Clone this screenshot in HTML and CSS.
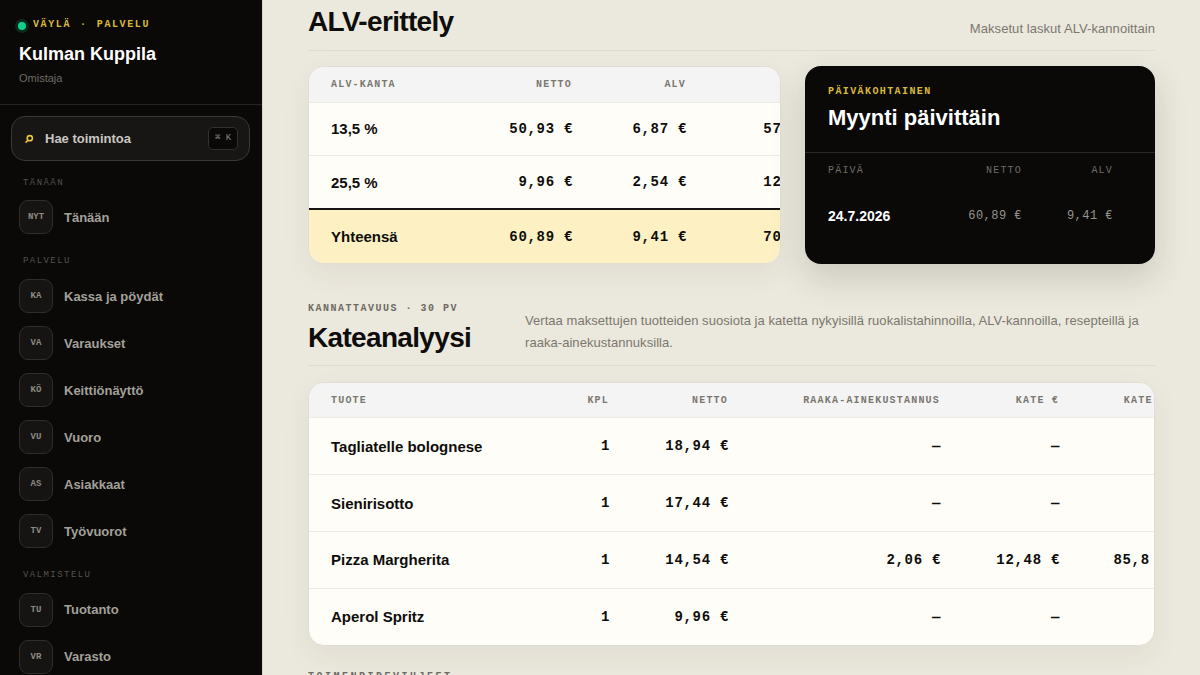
FILE: index.html
```html
<!DOCTYPE html>
<html lang="fi">
<head>
    <meta charset="UTF-8">
    <title>Kulman Kuppila</title>
    <link rel="stylesheet" href="styles.css">
</head>
<body>
    <aside class="sidebar">
        <div class="brand">
            <div class="brand-tag"><span class="dot"></span>VÄYLÄ · PALVELU</div>
            <div class="brand-name">Kulman Kuppila</div>
            <div class="brand-role">Omistaja</div>
        </div>
        <div class="search">
            <svg class="search-icon" width="10" height="10" viewBox="0 0 10 10"><circle cx="5.8" cy="4.2" r="2.6" fill="none" stroke="#e8c33f" stroke-width="1.6"/><path d="M3.9 6.2 1.6 8.6" stroke="#e8c33f" stroke-width="1.6" fill="none"/></svg>
            <span class="search-text">Hae toimintoa</span>
            <span class="kbd">⌘ K</span>
        </div>
        <nav class="nav">
            <div class="nav-label">TÄNÄÄN</div>
            <div class="nav-item"><span class="nav-box">NYT</span>Tänään</div>
            <div class="nav-label">PALVELU</div>
            <div class="nav-item"><span class="nav-box">KA</span>Kassa ja pöydät</div>
            <div class="nav-item"><span class="nav-box">VA</span>Varaukset</div>
            <div class="nav-item"><span class="nav-box">KÖ</span>Keittiönäyttö</div>
            <div class="nav-item"><span class="nav-box">VU</span>Vuoro</div>
            <div class="nav-item"><span class="nav-box">AS</span>Asiakkaat</div>
            <div class="nav-item"><span class="nav-box">TV</span>Työvuorot</div>
            <div class="nav-label">VALMISTELU</div>
            <div class="nav-item"><span class="nav-box">TU</span>Tuotanto</div>
            <div class="nav-item"><span class="nav-box">VR</span>Varasto</div>
        </nav>
    </aside>

    <main class="main">
        <div class="section-head first">
            <h2 class="title">ALV-erittely</h2>
            <p class="head-note">Maksetut laskut ALV-kannoittain</p>
        </div>

        <div class="vat-row">
            <div class="card">
                <table class="table vat-table">
                    <colgroup><col class="v1"><col class="v2"><col class="v3"><col class="v4"></colgroup>
                    <tr><th>ALV-KANTA</th><th class="num">NETTO</th><th class="num">ALV</th><th class="num">BRUTTO</th></tr>
                    <tr><td class="name">13,5 %</td><td class="num">50,93 €</td><td class="num">6,87 €</td><td class="num">57,80 €</td></tr>
                    <tr><td class="name">25,5 %</td><td class="num">9,96 €</td><td class="num">2,54 €</td><td class="num">12,50 €</td></tr>
                    <tr class="total"><td class="name">Yhteensä</td><td class="num">60,89 €</td><td class="num">9,41 €</td><td class="num">70,30 €</td></tr>
                </table>
            </div>

            <div class="dark-card">
                <div class="dark-head">
                    <div class="dark-tag">PÄIVÄKOHTAINEN</div>
                    <div class="dark-title">Myynti päivittäin</div>
                </div>
                <table class="dark-table">
                    <colgroup><col class="d1"><col class="d2"><col class="d3"></colgroup>
                    <tr><th>PÄIVÄ</th><th class="num">NETTO</th><th class="num">ALV</th></tr>
                    <tr><td class="date">24.7.2026</td><td class="num">60,89 €</td><td class="num">9,41 €</td></tr>
                </table>
            </div>
        </div>

        <div class="section-head second">
            <div class="head-left">
                <div class="eyebrow">KANNATTAVUUS · 30 PV</div>
                <h2 class="title">Kateanalyysi</h2>
            </div>
            <p class="head-text">Vertaa maksettujen tuotteiden suosiota ja katetta nykyisillä ruokalistahinnoilla, ALV-kannoilla, resepteillä ja raaka-ainekustannuksilla.</p>
        </div>

        <div class="card">
            <table class="table margin-table">
                <colgroup><col class="m1"><col class="m2"><col class="m3"><col class="m4"><col class="m5"><col class="m6"></colgroup>
                <tr><th>TUOTE</th><th class="num">KPL</th><th class="num">NETTO</th><th class="num">RAAKA-AINEKUSTANNUS</th><th class="num">KATE €</th><th class="num">KATE-%</th></tr>
                <tr><td class="name">Tagliatelle bolognese</td><td class="num">1</td><td class="num">18,94 €</td><td class="num">—</td><td class="num">—</td><td class="num"></td></tr>
                <tr><td class="name">Sienirisotto</td><td class="num">1</td><td class="num">17,44 €</td><td class="num">—</td><td class="num">—</td><td class="num"></td></tr>
                <tr><td class="name">Pizza Margherita</td><td class="num">1</td><td class="num">14,54 €</td><td class="num">2,06 €</td><td class="num">12,48 €</td><td class="num">85,8 %</td></tr>
                <tr><td class="name">Aperol Spritz</td><td class="num">1</td><td class="num">9,96 €</td><td class="num">—</td><td class="num">—</td><td class="num"></td></tr>
            </table>
        </div>

        <div class="eyebrow next">TOIMENPIDEVIHJEET</div>
    </main>
</body>
</html>
```

FILE: styles.css
```css
* {
    box-sizing: border-box;
}
html, body {
    margin: 0;
    height: 100%;
    overflow: hidden;
}
body {
    display: flex;
    font-family: "Liberation Sans", Arial, sans-serif;
    background: #ebe8dd;
    color: #0e0d0b;
}
p, h2 {
    margin: 0;
}

/* sidebar */
.sidebar {
    width: 263px;
    flex: none;
    height: 675px;
    overflow: hidden;
    background: #0a0908;
    border-right: 1px solid #d9d6cc;
}
.brand {
    padding: 19px 19px 19px;
    border-bottom: 1px solid #262422;
}
.brand-tag {
    display: flex;
    align-items: center;
    font-family: "Liberation Mono", monospace;
    font-size: 10px;
    font-weight: 700;
    line-height: 12px;
    letter-spacing: .16em;
    word-spacing: 1.5px;
    white-space: pre;
    color: #d9b93c;
}
.dot {
    width: 8px;
    height: 8px;
    margin: 1px 7px 0 -1px;
    border-radius: 50%;
    background: #10d08a;
    box-shadow: 0 0 0 3px rgba(16, 208, 138, .16);
}
.brand-name {
    margin-top: 12px;
    font-size: 18px;
    font-weight: 700;
    line-height: 22px;
    color: #fff;
}
.brand-role {
    margin-top: 6px;
    font-size: 11px;
    line-height: 14px;
    color: #6e6b66;
}
.search {
    display: flex;
    align-items: center;
    height: 45px;
    margin: 11px 12px 0 11px;
    padding: 0 12px 0 12px;
    border: 1px solid #3b3936;
    border-radius: 14px;
    background: #171614;
}
.search-icon {
    flex: none;
}
.search-text {
    flex: 1;
    margin-left: 11px;
    font-size: 13px;
    font-weight: 700;
    color: #c9c7c2;
}
.kbd {
    width: 30px;
    height: 23px;
    margin-right: -1px;
    border: 1px solid #33312e;
    border-radius: 5px;
    background: #0a0908;
    font-family: "Liberation Mono", monospace;
    font-size: 9px;
    line-height: 21px;
    text-align: center;
    color: #85827c;
}
.nav {
    display: flex;
    flex-direction: column;
    padding: 15.5px 19px 0;
}
.nav-label {
    margin: 8px 0 11.75px 4px;
    font-family: "Liberation Mono", monospace;
    font-size: 9px;
    line-height: 12px;
    letter-spacing: .16em;
    color: #55524d;
}
.nav-label:first-child {
    margin-top: 0;
}
.nav-item {
    display: flex;
    align-items: center;
    height: 34px;
    margin-bottom: 13px;
    font-size: 13px;
    font-weight: 700;
    color: #a3a09a;
}
.nav-box {
    display: flex;
    align-items: center;
    justify-content: center;
    flex: none;
    width: 34px;
    height: 34px;
    margin-right: 11px;
    border: 1px solid #2f2d2a;
    border-radius: 9px;
    background: #151412;
    font-family: "Liberation Mono", monospace;
    font-size: 9px;
    font-weight: 700;
    color: #8d8a84;
}

/* main */
.main {
    flex: 1;
    min-width: 0;
    height: 675px;
    overflow: hidden;
    padding: 0 45px;
}
.section-head {
    display: flex;
    border-bottom: 1px solid #dedbd1;
}
.section-head.first {
    justify-content: space-between;
    height: 51px;
    padding-top: 5px;
}
.section-head.second {
    height: 63px;
    margin-top: 39px;
}
.title {
    font-size: 28px;
    font-weight: 700;
    line-height: 33px;
    letter-spacing: -.024em;
}
.head-note {
    padding-top: 15px;
    font-size: 13px;
    line-height: 18px;
    letter-spacing: .06px;
    color: #7b776f;
}
.head-left {
    flex: none;
    width: 217px;
}
.head-left .title {
    margin-top: 6px;
}
.head-text {
    padding-top: 7px;
    font-size: 13px;
    line-height: 22px;
    letter-spacing: .05px;
    color: #7b776f;
}
.eyebrow {
    font-family: "Liberation Mono", monospace;
    font-size: 10px;
    font-weight: 700;
    line-height: 12px;
    letter-spacing: .15em;
    color: #6f6b63;
    white-space: nowrap;
}
.eyebrow.next {
    margin-top: 25px;
    letter-spacing: .25em;
}
.vat-row {
    display: grid;
    grid-template-columns: 473px 350px;
    column-gap: 24px;
    margin-top: 15px;
}
.card {
    overflow: hidden;
    border: 1px solid #e0ddd3;
    border-radius: 16px;
    background: #fffdf8;
    box-shadow: 0 10px 30px rgba(60, 55, 40, .06);
}
.main > .card {
    margin-top: 16px;
}
.table {
    border-collapse: collapse;
    table-layout: fixed;
}
.table th {
    height: 35px;
    padding: 0 22px;
    background: #f4f4f5;
    font-family: "Liberation Mono", monospace;
    font-size: 10px;
    font-weight: 700;
    letter-spacing: .12em;
    text-align: left;
    white-space: nowrap;
    color: #7a776f;
}
.table td {
    padding: 0 22px;
    border-top: 1px solid #edebe5;
    white-space: nowrap;
}
.table th.num, .table td.num {
    text-align: right;
}
.table td.num {
    padding-right: 21px;
    font-family: "Liberation Mono", monospace;
    font-size: 14px;
    font-weight: 700;
    letter-spacing: .05em;
}
.table td.name {
    font-size: 15px;
    font-weight: 700;
}
.vat-table {
    width: 539px;
}
.v1 { width: 171px; }
.v2, .v3 { width: 114px; }
.v4 { width: 140px; }
.vat-table td {
    height: 53.67px;
}
.vat-table .total td {
    border-top: 2px solid #161513;
    background: #fdf1c4;
}
.margin-table {
    width: 880px;
}
.m1 { width: 232px; }
.m2 { width: 90px; }
.m3, .m5 { width: 119px; }
.m4 { width: 212px; }
.m6 { width: 108px; }
.margin-table td {
    height: 56.75px;
}

/* dark card */
.dark-card {
    border-radius: 16px;
    background: #0a0908;
    box-shadow: 0 14px 34px rgba(40, 36, 25, .16);
}
.dark-head {
    height: 87px;
    padding: 20px 23px 0;
    border-bottom: 1px solid #2a2826;
}
.dark-tag {
    font-family: "Liberation Mono", monospace;
    font-size: 10px;
    font-weight: 700;
    line-height: 12px;
    letter-spacing: .14em;
    color: #d9b93c;
}
.dark-title {
    margin-top: 6px;
    font-size: 22px;
    font-weight: 700;
    line-height: 28px;
    color: #fff;
}
.dark-table {
    width: 100%;
    border-collapse: collapse;
    table-layout: fixed;
}
.d1 { width: 150px; }
.d2 { width: 67px; }
.dark-table th {
    height: 35px;
    padding: 0 0 0 23px;
    font-family: "Liberation Mono", monospace;
    font-size: 10px;
    font-weight: 400;
    letter-spacing: .12em;
    text-align: left;
    color: #6f6c66;
}
.dark-table td {
    height: 55px;
    padding: 0 0 0 23px;
}
.dark-table th.num, .dark-table td.num {
    padding: 0;
    text-align: right;
}
.dark-table tr > :last-child {
    padding-right: 42px;
}
.dark-table td.num {
    font-family: "Liberation Mono", monospace;
    font-size: 12px;
    letter-spacing: .04em;
    color: #96938d;
}
.dark-table .date {
    font-size: 14px;
    font-weight: 700;
    color: #fff;
}
```
